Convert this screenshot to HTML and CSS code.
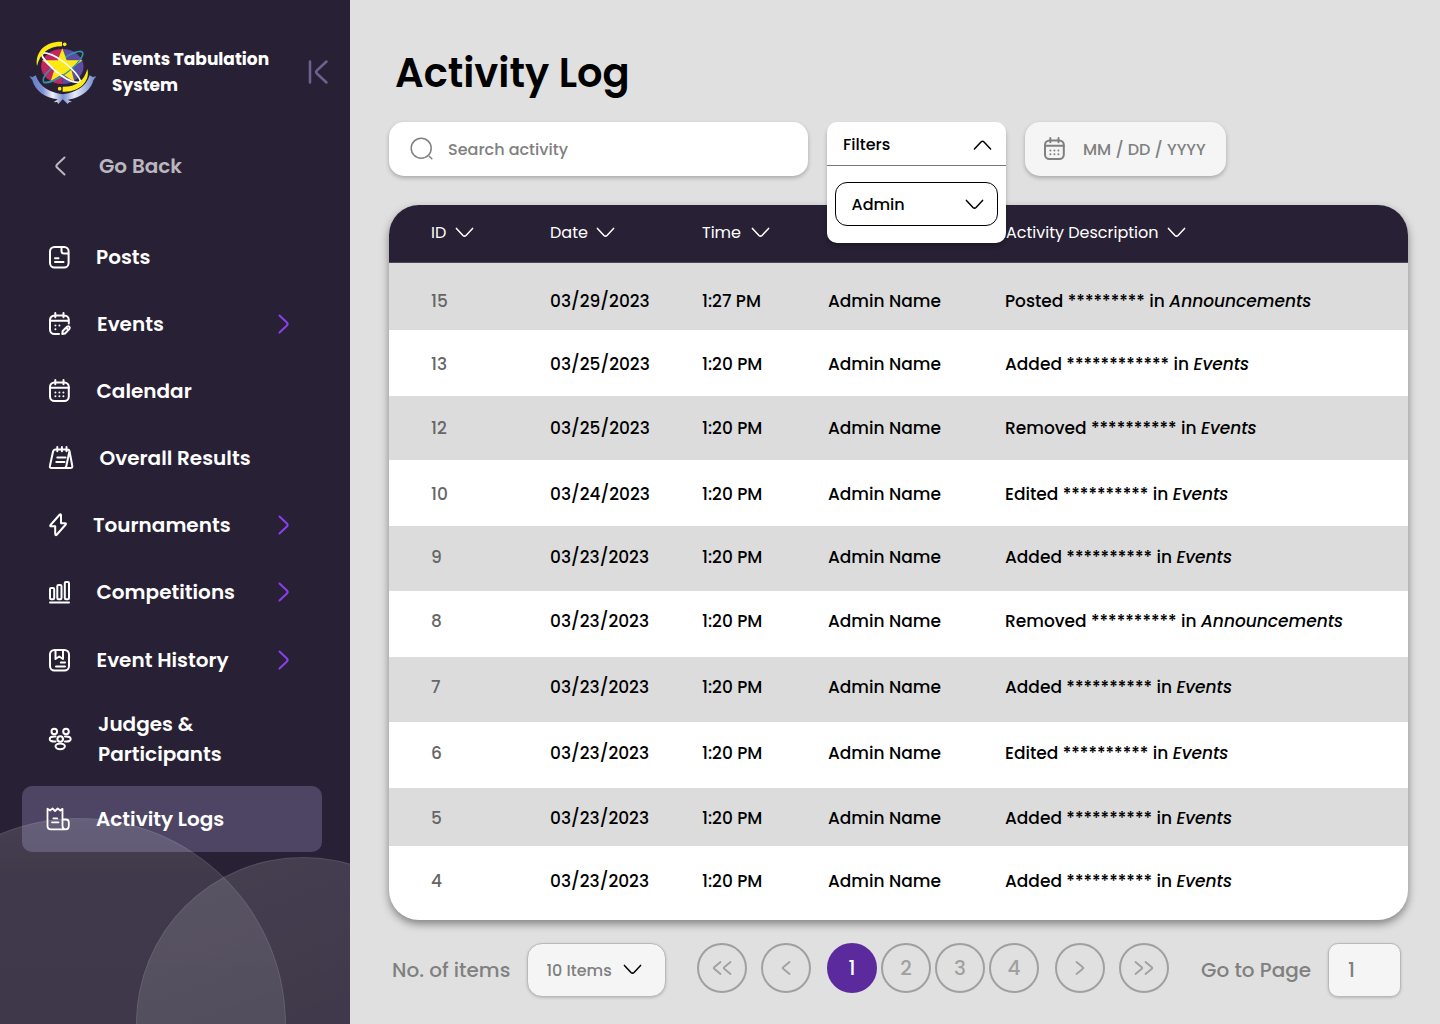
FILE: index.html
```html
<!DOCTYPE html>
<html lang="en">
<head>
<meta charset="utf-8">
<title>Activity Log</title>
<link rel="stylesheet" href="styles.css">
</head>
<body>
<svg class="defs" width="0" height="0" aria-hidden="true">
  <symbol id="down" viewBox="0 0 20 12"><path d="M1.5 1.5 8.4 8.9Q10 10.4 11.6 8.9L18.500 1.500"/></symbol>
  <symbol id="right" viewBox="0 0 12 20"><path d="M1.5 1.5 8.9 8.4Q10.4 10 8.9 11.6L1.5 18.5"/></symbol>
  <symbol id="left" viewBox="0 0 12 20"><path d="M10.5 1.5 3.1 8.4Q1.6 10 3.1 11.6L10.5 18.5"/></symbol>
  <symbol id="calendar" viewBox="0 0 24 24"><rect x="2" y="3.500" width="18.800" height="18.500" rx="4.500"/><path d="M2 8.700H20.800M7.300 1V5.200M15.500 1V5.200"/><path class="dots" d="M7.400 13.500h.01M11.400 13.500h.01M15.400 13.500h.01M7.400 17.300h.01M11.400 17.300h.01M15.400 17.300h.01"/></symbol>
</svg>
<div class="app">
  <aside class="sidebar">
    <header class="brand">
      <svg class="logo" viewBox="27 30 204 195">
        <defs>
          <linearGradient id="ribbon" x1="0" x2="1"><stop offset="0" stop-color="#5c7cc4"/><stop offset=".2" stop-color="#7f92d2"/><stop offset=".35" stop-color="#f1f2fb"/><stop offset=".5" stop-color="#7b90d0"/><stop offset=".68" stop-color="#e8eaf8"/><stop offset="1" stop-color="#6585c9"/></linearGradient>
        </defs>
        <path fill="#c0265f" d="M127 57a63 52 0 0 0 0 105z"/>
        <path fill="#5c4ca2" d="M127 57a63 52 0 0 1 0 105z"/>
        <ellipse cx="129" cy="111" rx="73" ry="20" transform="rotate(-37 129 111)" fill="none" stroke="#2e93a5" stroke-width="5"/>
        <path fill="#fdea14" d="M127 55 140 91H188L153 115 163 155 127 132 92 154 104 116 66 91H113z"/>
        <path d="M72 158C100 158 150 128 178 92" fill="none" stroke="#2e93a5" stroke-width="4"/>
        <path d="M67 68C48 72 138 168 183 156" fill="none" stroke="#fff" stroke-width="5.500"/>
        <path d="M67 68C105 68 168 118 183 156" fill="none" stroke="#fff" stroke-width="5"/>
        <circle cx="67" cy="68" r="6" fill="#fff"/><circle cx="183" cy="156" r="6" fill="#fff"/>
        <path fill="#fdea14" d="M51 108C44 64 78 33 126 35V49C89 48 62 66 51 108zM202 117C212 153 178 188 128 185V170C166 171 192 155 202 117z"/>
        <circle cx="134" cy="43" r="5.500" fill="#fdea14"/><circle cx="119" cy="176" r="5.500" fill="#fdea14"/>
        <path fill="url(#ribbon)" d="M28 139 38 141 47 136C60 173 91 188 128 193 166 188 199 171 209 136L218 141 229 139 220 151C213 184 174 207 143 209L156 216 147 217 143 222 128 208 115 222 111 216 101 217 113 208C76 204 45 183 37 151z"/>
      </svg>
      <div class="brand-name">Events Tabulation<br>System</div>
      <svg class="collapse" viewBox="0 0 20 24"><path d="M2 1.500v21M18.500 1.500 9 10.300Q7.200 12 9 13.700L18.500 22.500"/></svg>
    </header>
    <a class="back"><svg class="arrow-left"><use href="#left"/></svg><span>Go Back</span></a>
    <nav class="nav">
      <a class="item posts"><svg viewBox="0 0 24 24"><rect x="2" y="2" width="18.600" height="20.500" rx="4.500"/><path d="M13.500 2.500V6q0 2.500 2.500 2.500h4M7 13.300h3.500M7 17h8.500"/></svg><span>Posts</span></a>
      <a class="item events"><svg viewBox="0 0 24 24"><path d="M20.800 11.500V8A4.500 4.500 0 0 0 16.300 3.500H6.500A4.500 4.500 0 0 0 2 8v9.500A4.500 4.500 0 0 0 6.500 22H11M2 8.700H20.800M7.300 1V5.200M15.500 1V5.200"/><path d="M14.300 22l.4-3 4.300-4.200q1.300-1 2.300 0t0 2.300L17 21.500zM18.300 15.800l1.800 1.800"/><path class="dots" d="M7.400 13.500h.01M11.400 13.500h.01M7.400 17.300h.01"/></svg><span>Events</span><svg class="more"><use href="#right"/></svg></a>
      <a class="item"><svg viewBox="0 0 24 24"><use href="#calendar"/></svg><span>Calendar</span></a>
      <a class="item results"><svg viewBox="0 0 26 24"><path d="M7.800 3.500H19.500Q21.800 3.500 21.300 5.800L18.300 20.200Q17.900 22 16 22H3.500Q1.400 22 1.900 20L5 5.700Q5.500 3.500 7.800 3.500zM21.500 5 24.300 20Q24.500 22 22.500 22H16.500M9.300 1V5.200M13.900 1V5.200M18.500 1V5.200M9.300 11.500H17.500M8.300 16H16.500"/></svg><span>Overall Results</span></a>
      <a class="item tournaments"><svg viewBox="0 0 24 24"><path d="M11.800 1.500 2.500 12q-.8 1.300.7 1.300H7.200V21q.3 2 1.700.5L17.700 11.500q.8-1.300-.7-1.300H13V2.200q-.2-1.300-1.200-.7z"/></svg><span>Tournaments</span><svg class="more"><use href="#right"/></svg></a>
      <a class="item competitions"><svg viewBox="0 0 24 24"><rect x="2" y="8" width="4.200" height="11.300" rx="1.200"/><rect x="9.300" y="5" width="4.200" height="14.300" rx="1.200"/><rect x="16.800" y="2" width="4.200" height="17.300" rx="1.200"/><path d="M2 22.500H21"/></svg><span>Competitions</span><svg class="more"><use href="#right"/></svg></a>
      <a class="item history"><svg viewBox="0 0 24 24"><rect x="2" y="2" width="19" height="20.500" rx="4.500"/><path d="M7.500 2.500V11L11.300 8.500 15 11V2.500M12.800 14.500H17M8 18.500H17"/></svg><span>Event History</span><svg class="more"><use href="#right"/></svg></a>
      <a class="item judges"><svg viewBox="0 0 24 24"><circle cx="6.300" cy="4.500" r="2.800"/><circle cx="18" cy="4.500" r="2.800"/><circle cx="12.200" cy="12" r="2.800"/><ellipse cx="12.200" cy="19.300" rx="4.700" ry="2.900"/><path d="M7.500 14.500C3.500 14.800 1.700 13.700 1.700 12S3.500 9.200 7.500 9.500M17 14.500C21 14.800 22.700 13.700 22.700 12S21 9.200 17 9.500"/></svg><span>Judges &amp;<br>Participants</span></a>
      <a class="item active"><svg viewBox="0 0 24 24"><path d="M16.500 13V1.800L14.300 3.500 11.700 1.500 9 4 6.500 1.500 4 3.500 1.500 1.800V19Q1.500 22.300 5 22.300H18.500M16.500 12.500H20Q22.800 12.500 22.800 15.500V19Q22.800 22.300 19.700 22.300 16.500 22.300 16.500 19zM7.300 11.300H11.300M6 15.300H12.500"/></svg><span>Activity Logs</span></a>
    </nav>
    <div class="bubble bubble-large"></div>
    <div class="bubble bubble-small"></div>
  </aside>

  <main class="main">
    <h1><span>Activity Log</span></h1>
    <div class="toolbar">
      <div class="field search"><svg viewBox="0 0 24 24"><circle cx="11.200" cy="11.200" r="10"/><path d="M19.200 19.200 21.800 21.800"/></svg><span>Search activity</span></div>
      <div class="filter-anchor">
        <div class="filters">
          <div class="filters-head"><span>Filters</span><svg class="chev flip"><use href="#down"/></svg></div>
          <div class="filters-select"><span>Admin</span><svg class="chev"><use href="#down"/></svg></div>
        </div>
      </div>
      <div class="field date"><svg viewBox="0 0 24 24"><use href="#calendar"/></svg><span>MM / DD / YYYY</span></div>
    </div>

    <section class="table">
      <div class="row head">
        <div class="th"><span class="w-id">ID</span><svg class="chev"><use href="#down"/></svg></div>
        <div class="th"><span class="w-date">Date</span><svg class="chev"><use href="#down"/></svg></div>
        <div class="th"><span class="w-time">Time</span><svg class="chev"><use href="#down"/></svg></div>
        <div class="th"></div>
        <div class="th"><span class="w-desc">Activity Description</span><svg class="chev"><use href="#down"/></svg></div>
      </div>
      <div class="row r1"><span class="id">15</span><span>03/29/2023</span><span>1:27 PM</span><span>Admin Name</span><span>Posted ********* in <i>Announcements</i></span></div>
      <div class="row r2"><span class="id">13</span><span>03/25/2023</span><span>1:20 PM</span><span>Admin Name</span><span>Added ************ in <i>Events</i></span></div>
      <div class="row r3"><span class="id">12</span><span>03/25/2023</span><span>1:20 PM</span><span>Admin Name</span><span>Removed ********** in <i>Events</i></span></div>
      <div class="row r4"><span class="id">10</span><span>03/24/2023</span><span>1:20 PM</span><span>Admin Name</span><span>Edited ********** in <i>Events</i></span></div>
      <div class="row r5"><span class="id">9</span><span>03/23/2023</span><span>1:20 PM</span><span>Admin Name</span><span>Added ********** in <i>Events</i></span></div>
      <div class="row r6"><span class="id">8</span><span>03/23/2023</span><span>1:20 PM</span><span>Admin Name</span><span>Removed ********** in <i>Announcements</i></span></div>
      <div class="row r7"><span class="id">7</span><span>03/23/2023</span><span>1:20 PM</span><span>Admin Name</span><span>Added ********** in <i>Events</i></span></div>
      <div class="row r8"><span class="id">6</span><span>03/23/2023</span><span>1:20 PM</span><span>Admin Name</span><span>Edited ********** in <i>Events</i></span></div>
      <div class="row r9"><span class="id">5</span><span>03/23/2023</span><span>1:20 PM</span><span>Admin Name</span><span>Added ********** in <i>Events</i></span></div>
      <div class="row r10"><span class="id">4</span><span>03/23/2023</span><span>1:20 PM</span><span>Admin Name</span><span>Added ********** in <i>Events</i></span></div>
    </section>

    <footer class="footer">
      <div class="count-label"><span>No. of items</span></div>
      <div class="count-select"><span>10 Items</span><svg class="chev"><use href="#down"/></svg></div>
      <div class="pages">
        <button class="page"><svg class="double" viewBox="0 0 20 14"><path d="M8.500 1 2.200 6.200Q1.200 7 2.200 7.800L8.500 13M18.500 1 12.200 6.200Q11.200 7 12.200 7.800L18.500 13"/></svg></button>
        <button class="page prev"><svg class="single" viewBox="0 0 10 14"><path d="M8.500 1 2.200 6.200Q1.200 7 2.200 7.800L8.500 13"/></svg></button>
        <button class="page current">1</button>
        <button class="page near">2</button>
        <button class="page near">3</button>
        <button class="page near">4</button>
        <button class="page next"><svg class="single" viewBox="0 0 10 14"><path d="M1.500 1 7.800 6.200Q8.800 7 7.800 7.800L1.500 13"/></svg></button>
        <button class="page last"><svg class="double" viewBox="0 0 20 14"><path d="M1.500 1 7.800 6.200Q8.800 7 7.800 7.800L1.500 13M11.500 1 17.800 6.200Q18.800 7 17.800 7.800L11.500 13"/></svg></button>
      </div>
      <div class="goto-label"><span>Go to Page</span></div>
      <div class="goto-input">1</div>
    </footer>
  </main>
</div>
</body>
</html>
```
FILE: styles.css
```css
* { box-sizing: border-box; }
body {
  margin: 0;
  width: 1440px;
  height: 1024px;
  overflow: hidden;
  font-family: Poppins, Inter, sans-serif;
  background: #e0e0e0;
  color: #000;
}
.defs { position: absolute; }
svg { fill: none; stroke: currentColor; stroke-width: 2; stroke-linecap: round; stroke-linejoin: round; flex: none; }
span { white-space: nowrap; }
.app { display: flex; width: 1440px; height: 1024px; }

/* Sidebar */
.sidebar { position: relative; width: 350px; height: 1024px; overflow: hidden; background: #282135; color: #fff; flex: none; }
.brand { display: flex; padding: 40px 0 0 29px; height: 139px; }
.logo { width: 68px; height: 65px; stroke: none; }
.brand-name { width: 180px; margin: 6px 0 0 15px; font-size: 17px; font-weight: 700; line-height: 26px; }
.collapse { width: 20px; height: 24px; margin: 20px 0 0 15.500px; color: #6d6292; stroke-width: 2.500; }
.back { display: flex; align-items: center; height: 54px; padding-left: 54px; margin-bottom: 30px; color: #bab7bf; font-size: 20px; font-weight: 600; }
.back span { margin-left: 33px; }
.arrow-left { width: 12px; height: 20px; }
.nav { margin-left: 22px; width: 300px; }
.item { display: flex; align-items: center; height: 67px; padding-left: 25.500px; border-radius: 10px; font-size: 20px; font-weight: 600; line-height: 30px; }
.item > svg:first-child { width: 24px; height: 24px; }
.item span { width: 178px; margin-left: 25px; }
.posts span { margin-left: 24.500px; }
.events span { margin-left: 25.500px; width: 177.500px; }
.dots { stroke-width: 2; }
.item .more { width: 12px; height: 20px; margin-left: 3.500px; color: #8b3ff0; }
.results > svg:first-child { width: 26px; }
.results span { margin-left: 26px; }
.tournaments span { margin-left: 21.500px; width: 181.500px; }
.competitions, .history { height: 68px; }
.judges { height: 92px; padding-bottom: 2px; }
.judges span { margin-left: 26.500px; }
.item.active { height: 66px; padding-left: 24px; background: #4d4563; }
.active > svg { stroke-width: 1.800; }
.active span { margin-left: 26px; }
.bubble { position: absolute; border-radius: 50%; border: 1px solid rgba(255,255,255,.09); }
.bubble-large { width: 414px; height: 414px; left: -128px; top: 818px; background: linear-gradient(180deg, rgba(255,255,255,.14), rgba(255,255,255,.11) 14%, rgba(255,255,255,.1)); }
.bubble-small { width: 334px; height: 334px; left: 136px; top: 857px; background: linear-gradient(160deg, rgba(255,255,255,.14), rgba(255,255,255,.11) 50%); }

/* Main */
.main { width: 1090px; padding: 43px 32px 0 39px; }
h1 { margin: 0 0 19px 6px; height: 60px; font-size: 40px; font-weight: 600; line-height: 60px; }
.toolbar { display: flex; gap: 19px; height: 54px; margin-bottom: 29px; }
.field { display: flex; align-items: center; height: 54px; border-radius: 15px; box-shadow: 0 2px 4px rgba(0,0,0,.25); color: #808080; font-size: 16px; font-weight: 500; }
.field svg { width: 24px; height: 24px; }
.search { width: 419px; padding-left: 20.500px; background: #fff; }
.search svg { stroke-width: 1.500; }
.search span { margin-left: 14.500px; }
.date { width: 201px; padding-left: 17.500px; background: #f5f5f5; }
.date span { margin-left: 16.500px; }
.filter-anchor { position: relative; width: 179px; height: 54px; }
.filters { position: absolute; left: 0; top: 0; width: 179px; height: 121px; border-radius: 10px; background: #fff; box-shadow: 0 4px 4px rgba(0,0,0,.25); z-index: 2; font-size: 16px; font-weight: 500; }
.filters-head { display: flex; align-items: center; justify-content: space-between; height: 44px; padding: 2px 14.500px 0 16px; border-bottom: 1px solid #777; }
.filters-select { display: flex; align-items: center; justify-content: space-between; width: 163px; height: 44px; margin: 16px 8px; padding: 1px 13.500px 0 15.500px; border: 1px solid #000; border-radius: 12px; }
.chev { width: 19px; height: 11.400px; stroke-width: 1.600; }
.flip { transform: rotate(180deg); }

.table { width: 1019px; height: 715px; overflow: hidden; border-radius: 30px; background: #fff; box-shadow: 0 4px 8px rgba(0,0,0,.42); }
.row { display: grid; grid-template-columns: 119px 152px 126px 177px 1fr; padding-left: 42px; font-size: 17px; font-weight: 500; line-height: 24px; }
.row:nth-child(even) { background: #dcdcdc; }
.row.head { height: 58px; padding-top: 16px; background: #282135; border-bottom: 1px solid #4c4658; color: #fff; font-size: 16px; font-weight: 400; }
.th { display: flex; align-items: center; height: 24px; }
.w-id { width: 23.500px; }
.w-date { width: 45.500px; }
.w-time { width: 48.500px; }
.w-desc { width: 160.500px; margin-left: 1px; }
.id { color: #666; }
.r1 { height: 67px; padding-top: 26px; }
.r2 { height: 66px; padding-top: 22px; }
.r3 { height: 64px; padding-top: 20px; }
.r4 { height: 66px; padding-top: 22px; }
.r5 { height: 65px; padding-top: 19px; }
.r6 { height: 66px; padding-top: 18px; }
.r7 { height: 65px; padding-top: 18px; }
.r8 { height: 66px; padding-top: 19px; }
.r9 { height: 58px; padding-top: 18px; }
.r10 { height: 74px; padding-top: 23px; }

/* Pagination */
.footer { display: flex; margin-top: 23px; height: 54px; color: #808080; font-weight: 500; }
.count-label { width: 138px; padding-left: 3px; font-size: 20px; line-height: 54px; }
.count-select { display: flex; align-items: center; width: 139px; height: 54px; padding-left: 18.500px; border: 1px solid #b9b9b9; border-radius: 15px; background: #f5f5f5; box-shadow: 0 1px 3px rgba(0,0,0,.18); font-size: 16px; }
.count-select span { width: 76.500px; }
.count-select .chev { color: #000; }
.pages { display: flex; width: 504px; margin-left: 31px; }
.page { display: flex; align-items: center; justify-content: center; width: 50px; height: 50px; padding: 0; border: 2px solid #a0a0a0; border-radius: 50%; background: transparent; color: #a0a0a0; font: 500 20px Poppins, Inter, sans-serif; flex: none; }
.prev, .last { margin-left: 14px; }
.current { margin-left: 16px; border-color: #5b2a9d; background: #5b2a9d; color: #fff; }
.near { margin-left: 4px; }
.next { margin-left: 16px; }
.double { width: 20px; height: 14px; stroke-width: 1.800; }
.single { width: 10px; height: 14px; stroke-width: 1.800; }
.goto-label { width: 127px; font-size: 20px; line-height: 54px; }
.goto-input { width: 73px; height: 54px; padding-left: 19px; border: 1px solid #b9b9b9; border-radius: 10px; background: #f5f5f5; box-shadow: 0 1px 3px rgba(0,0,0,.18); font-size: 20px; line-height: 52px; }
```
